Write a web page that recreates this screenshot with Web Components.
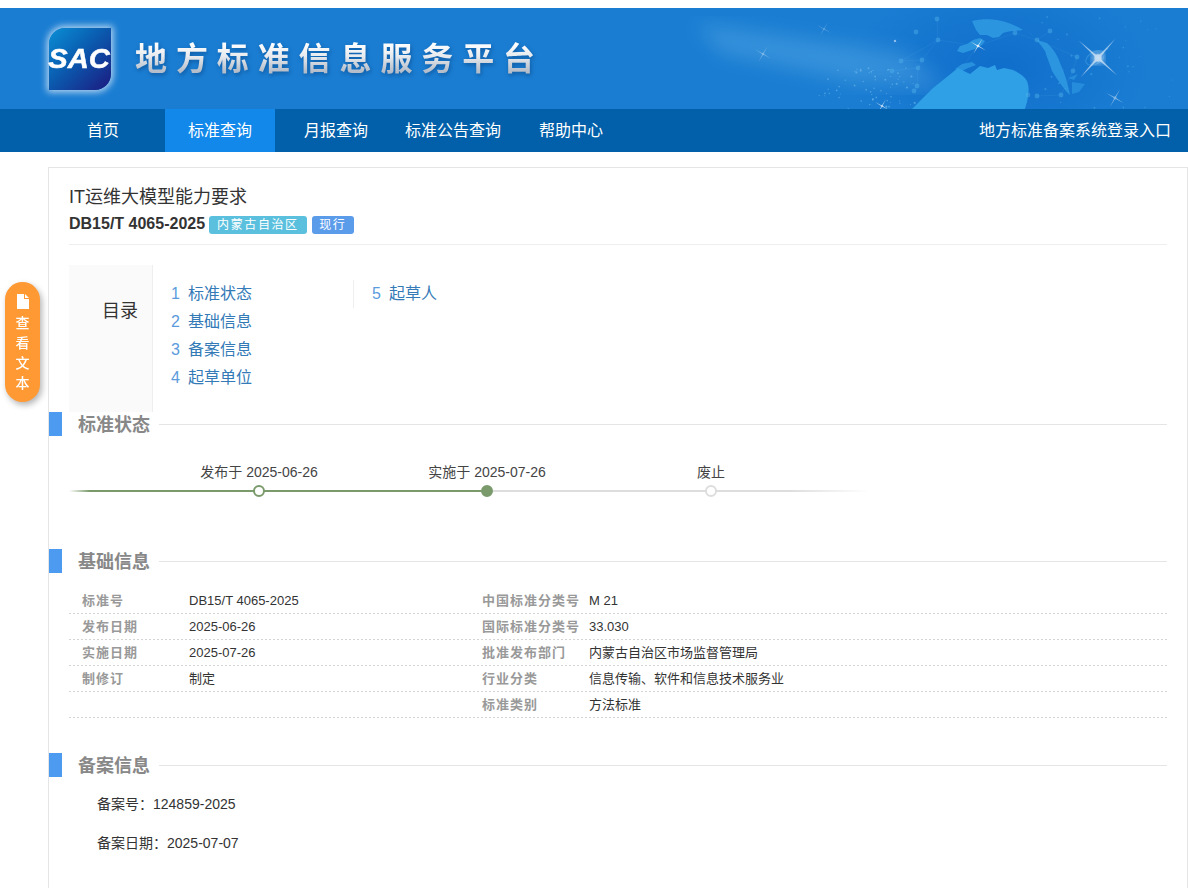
<!DOCTYPE html>
<html lang="zh-CN">
<head>
<meta charset="utf-8">
<title>地方标准信息服务平台</title>
<style>
  html, body { margin: 0; padding: 0; height: 888px; overflow: hidden; background: #fff; }
  body { padding-top: 8px; box-sizing: border-box; font-family: "Liberation Sans", "Noto Sans CJK SC", sans-serif; color: #333; }
</style>
</head>
<body>
<site-banner></site-banner>
<site-nav></site-nav>
<float-button></float-button>
<std-card>
  <std-heading name="IT运维大模型能力要求" code="DB15/T 4065-2025"></std-heading>
  <std-toc></std-toc>
  <std-section title="标准状态" gap="26">
    <std-timeline></std-timeline>
  </std-section>
  <std-section title="基础信息" gap="15" top="47">
    <info-table></info-table>
  </std-section>
  <std-section title="备案信息" gap="17" top="35">
    <record-lines></record-lines>
  </std-section>
</std-card>

<script>
const FONT = `"Liberation Sans", "Noto Sans CJK SC", sans-serif`;

const NAV_ITEMS = [
  { label: "首页", pad: "0 46px 0 0" },
  { label: "标准查询", pad: "0 23px" , active: true },
  { label: "月报查询", pad: "0 18px 0 29px" },
  { label: "标准公告查询", pad: "0 19px" },
  { label: "帮助中心", pad: "0 19px" },
];

const BASIC_INFO = [
  ["标准号", "DB15/T 4065-2025", "中国标准分类号", "M 21"],
  ["发布日期", "2025-06-26", "国际标准分类号", "33.030"],
  ["实施日期", "2025-07-26", "批准发布部门", "内蒙古自治区市场监督管理局"],
  ["制修订", "制定", "行业分类", "信息传输、软件和信息技术服务业"],
  ["", "", "标准类别", "方法标准"],
];

const TOC_ITEMS = ["标准状态", "基础信息", "备案信息", "起草单位", "起草人"];

// big network dots around the globe, x/y inside the banner
const NET_DOTS = [
  [937, 11], [916, 24], [938, 32], [901, 53], [922, 52], [918, 60], [892, 63], [917, 78], [914, 83],
  [1015, 25], [1037, 32], [1050, 23], [1077, 49], [1073, 63], [1061, 87], [1037, 88], [1028, 87],
];

function sparkle(x, y, r, angle, opacity) {
  const t = r * 0.05;
  return `<g filter="url(#hair)" opacity="${opacity}"><path transform="translate(${x} ${y}) rotate(${angle})" fill="#fff"
    d="M0 ${-r}L${t} ${-t}L${r} 0L${t} ${t}L0 ${r}L${-t} ${t}L${-r} 0L${-t} ${-t}Z"></path>
    <circle cx="${x}" cy="${y}" r="${Math.max(1, r * 0.14)}" fill="#fff"></circle></g>`;
}

function bannerDots() {
  let seed = 17;
  const rnd = () => (seed = (seed * 16807) % 2147483647) / 2147483647;
  let out = "";
  for (let i = 0; i < 70; i++) {
    const x = 815 + rnd() * 100;
    const y = 60 + rnd() * 41;
    if (x + y * 1.1 < 905) continue;
    out += `<circle cx="${x.toFixed(1)}" cy="${y.toFixed(1)}" r="${(0.5 + rnd() * 0.6).toFixed(1)}" fill="#7cc4f2" opacity="0.5"></circle>`;
  }
  for (let i = 0; i < 30; i++) {
    const x = 1040 + rnd() * 140;
    const y = rnd() * 101;
    out += `<circle cx="${x.toFixed(1)}" cy="${y.toFixed(1)}" r="${(0.5 + rnd() * 0.7).toFixed(1)}" fill="#4fa8e6" opacity="0.45"></circle>`;
  }
  return out + NET_DOTS.map(([x, y]) => `<circle cx="${x}" cy="${y}" r="2.4" fill="#4fb0ea" opacity="0.45" filter="url(#hair)"></circle>`).join("");
}

class SiteBanner extends HTMLElement {
  connectedCallback() {
    const root = this.attachShadow({ mode: "open" });
    root.innerHTML = `
      <style>
        :host { display: block; height: 101px; position: relative; overflow: hidden; background: #1a7dd2; }
        .art { position: absolute; inset: 0; width: 100%; height: 100%; }
        .inner { position: relative; display: flex; align-items: center; height: 100%; padding-left: 49px; gap: 24px; }
        .logo {
          position: relative; width: 62px; height: 62px; flex: none; margin-top: 1px;
          border-radius: 16px 0 16px 0;
          background: linear-gradient(135deg, #0a8fd6 0%, #0a5cb0 45%, #1c1a80 100%);
          box-shadow: 0 0 7px 2px rgba(255, 255, 255, 0.7);
        }
        .logo span {
          position: absolute; left: -1px; top: 17px; width: 62px; text-align: center;
          font: italic bold 28px/27px "Liberation Sans", sans-serif; color: #fff;
          transform: scaleX(1.04); -webkit-text-stroke: 0.5px #fff;
        }
        .name {
          font: 700 32px/44px "Noto Sans CJK SC", sans-serif; letter-spacing: 8.9px; white-space: nowrap;
          margin-top: -5px;
          background: linear-gradient(180deg, transparent 10%, #ffffff 20%, #e8ebef 50%, #b4bdc9 85%);
          -webkit-background-clip: text; background-clip: text; color: transparent;
          filter: drop-shadow(1px 2px 2px rgba(0, 40, 90, 0.4));
        }
      </style>
      <svg class="art" viewBox="0 0 1188 101" preserveAspectRatio="none" aria-hidden="true">
        <defs>
          <filter id="hair"><feGaussianBlur stdDeviation="0.4"></feGaussianBlur></filter>
          <filter id="halo"><feGaussianBlur stdDeviation="3"></feGaussianBlur></filter>
          <filter id="wide"><feGaussianBlur stdDeviation="10"></feGaussianBlur></filter>
          <radialGradient id="glow" cx="0.5" cy="0.5" r="0.5">
            <stop offset="0" stop-color="#0f6ccb" stop-opacity="0.9"></stop>
            <stop offset="1" stop-color="#0f6ccb" stop-opacity="0"></stop>
          </radialGradient>
        </defs>
        <ellipse cx="1000" cy="60" rx="150" ry="90" fill="url(#glow)"></ellipse>
        <path d="M695 15L905 45L945 80L860 75L720 45Z" fill="#6ab8ec" opacity="0.35" filter="url(#wide)"></path>
        <g stroke="#7cc4f2" stroke-width="0.4" opacity="0.22" fill="none">
          <path d="M937 11L938 32L901 53L922 52L938 32M922 52L918 60L892 63M918 60L917 78L914 83M938 32L977 38L1015 25M977 38L955 70M1015 25L1037 32L1050 23M1037 32L1077 49L1073 63L1061 87M1037 88L1061 87"></path>
        </g>
        <g fill="#2b95e0">
          <path d="M972 13C980 11 990 11 997 12C1008 14 1017 18 1023 22C1015 23 1009 23 1003 25L999 29L993 30L987 27L980 27L976 22Z"></path>
          <path d="M973 32L980 30L985 33L982 37L975 41L963 45L957 43L960 38L967 36Z"></path>
          <path d="M1027 22L1037 32L1047 35C1054 42 1058 48 1060 55C1065 66 1068 76 1070 87C1066 84 1064 80 1062 78C1058 72 1055 68 1052 63C1050 56 1047 50 1045 43C1040 36 1034 28 1027 22Z"></path>
          <path d="M1072 74L1085 76L1079 84L1072 86ZM1068 70L1078 66L1074 72Z" opacity="0.7"></path>
          <path d="M955 61L962 56L972 54L976 57L968 60L960 64Z" opacity="0.9"></path>
        </g>
        <path fill="#2f9fe6" d="M912 101L933 80L948 68L958 60L970 66L980 58L988 60L995 57L997 62L1004 60L1013 62C1020 65 1025 69 1027 73C1029 78 1029 83 1028 87C1028 92 1026 97 1025 101Z"></path>
        <ellipse cx="1095" cy="50" rx="10" ry="6" transform="rotate(-30 1095 50)" fill="none" stroke="#4fb0ea" stroke-width="1" opacity="0.45"></ellipse>
        <circle cx="1098" cy="50" r="6" fill="#fff" opacity="0.55" filter="url(#halo)"></circle>
        ${bannerDots()}
        ${sparkle(978, 38, 9, 30, 0.85)}
        ${sparkle(1098, 50, 26, 42, 0.55)}
        ${sparkle(1115, 90, 10, 30, 0.45)}
        ${sparkle(763, 46, 9, 30, 0.35)}
        ${sparkle(824, 21, 8, 30, 0.25)}
        ${sparkle(895, 33, 3, 30, 0.6)}
        ${sparkle(882, 98, 8, 30, 0.7)}
      </svg>
      <div class="inner">
        <div class="logo"><span>SAC</span></div>
        <div class="name">地方标准信息服务平台</div>
      </div>
    `;
  }
}

class SiteNav extends HTMLElement {
  connectedCallback() {
    const root = this.attachShadow({ mode: "open" });
    root.innerHTML = `
      <style>
        :host { display: flex; height: 43px; background: #0260aa; padding: 0 17px 0 87px; font: 16px/43px ${FONT}; color: #fff; }
        a { color: inherit; text-decoration: none; white-space: nowrap; display: block; }
        a.on { background: #1188ea; }
        .login { margin-left: auto; }
      </style>
      ${NAV_ITEMS.map((item) => `<a href="#" class="${item.active ? "on" : ""}" style="padding:${item.pad}">${item.label}</a>`).join("")}
      <a class="login" href="#">地方标准备案系统登录入口</a>
    `;
  }
}

class FloatButton extends HTMLElement {
  connectedCallback() {
    const root = this.attachShadow({ mode: "open" });
    root.innerHTML = `
      <style>
        :host {
          position: fixed; left: 5px; top: 282px; width: 35px; height: 120px; box-sizing: border-box;
          padding-top: 12px; border-radius: 18px; background: #ff9933; color: #fff;
          box-shadow: 2px 3px 6px rgba(0, 0, 0, 0.3);
          display: flex; flex-direction: column; align-items: center;
          font: 500 14px/20px ${FONT}; z-index: 5;
        }
        svg { width: 12px; height: 15px; fill: #fff; margin-bottom: 4px; display: block; }
        span { display: block; }
      </style>
      <svg viewBox="0 0 12 15" aria-hidden="true"><path d="M0 0H7V5H12V15H0ZM8 0L12 4H8Z"></path></svg>
      <span>查</span><span>看</span><span>文</span><span>本</span>
    `;
  }
}

class StdCard extends HTMLElement {
  connectedCallback() {
    const root = this.attachShadow({ mode: "open" });
    root.innerHTML = `
      <style>
        :host {
          display: block; box-sizing: border-box; width: 1140px; height: 760px; margin: 15px 0 0 48px;
          padding: 16px 20px 0; border: 1px solid #e5e5e5; background: #fff;
        }
      </style>
      <slot></slot>
    `;
  }
}

class StdHeading extends HTMLElement {
  connectedCallback() {
    const root = this.attachShadow({ mode: "open" });
    root.innerHTML = `
      <style>
        :host { display: block; padding-bottom: 7px; border-bottom: 1px solid #eee; color: #333; }
        h1 { margin: 0; font: 400 18px/26px ${FONT}; }
        .sub { display: flex; align-items: center; margin-top: 1px; height: 26px; }
        b { font: bold 16px/26px ${FONT}; margin-right: 4px; }
        .tag { height: 18px; border-radius: 3px; color: #fff; font: 12px/18px ${FONT}; letter-spacing: 1.6px; padding: 0 8px; margin-right: 5px; margin-top: 1px; }
        .blue { background: #5bc0de; }
        .state { background: #5a9bea; padding: 0 7.5px; }
      </style>
      <h1>${this.getAttribute("name")}</h1>
      <div class="sub">
        <b>${this.getAttribute("code")}</b>
        <span class="tag blue">内蒙古自治区</span>
        <span class="tag state">现行</span>
      </div>
    `;
  }
}

class StdToc extends HTMLElement {
  connectedCallback() {
    const root = this.attachShadow({ mode: "open" });
    const row = (label, i) => `<a href="#"><i>${i + 1}</i>${label}</a>`;
    root.innerHTML = `
      <style>
        :host { display: flex; height: 147px; margin-top: 20px; font: 16px/28px ${FONT}; }
        .head {
          width: 83px; background: #fafafa; border-right: 1px solid #eee;
          font-size: 18px; line-height: 93px; text-align: right; color: #333;
        }
        .head span { display: block; padding-right: 14px; }
        .col { width: 182px; padding: 15px 0 0 18px; }
        .col + .col { padding-left: 19px; position: relative; }
        .col + .col::before { content: ""; position: absolute; left: 0; top: 15px; height: 28px; border-left: 1px solid #eee; }
        a { display: block; color: #337ab7; text-decoration: none; white-space: nowrap; }
        i { font-style: normal; color: #5b9bdc; display: inline-block; width: 17px; }
      </style>
      <div class="head"><span>目录</span></div>
      <div class="col">${TOC_ITEMS.slice(0, 4).map(row).join("")}</div>
      <div class="col">${row(TOC_ITEMS[4], 4)}</div>
    `;
  }
}

class StdSection extends HTMLElement {
  connectedCallback() {
    const root = this.attachShadow({ mode: "open" });
    const top = this.getAttribute("top") || 0;
    const gap = this.getAttribute("gap") || 0;
    root.innerHTML = `
      <style>
        :host { display: block; margin: ${top}px -20px 0 -20px; }
        .bar { display: flex; align-items: center; height: 24px; }
        .mark { width: 13px; height: 24px; background: #4d9bf0; flex: none; }
        h2 { margin: 2px 9px 0 16px; font: bold 18px/24px ${FONT}; color: #888; white-space: nowrap; }
        .rule { flex: 1; height: 1px; background: #e5e5e5; margin-right: 20px; }
        .body { padding: ${gap}px 20px 0; }
      </style>
      <div class="bar"><span class="mark"></span><h2>${this.getAttribute("title")}</h2><span class="rule"></span></div>
      <div class="body"><slot></slot></div>
    `;
  }
}

class StdTimeline extends HTMLElement {
  connectedCallback() {
    const root = this.attachShadow({ mode: "open" });
    root.innerHTML = `
      <style>
        :host {
          display: grid; grid-template-columns: 190px 228px 224px 158px; width: 800px; height: 40px; position: relative;
          font: 14px/20px ${FONT}; color: #444;
        }
        .line { position: absolute; left: 0; top: 28px; height: 2px; }
        .todo { width: 800px; background: linear-gradient(90deg, #ddd 90%, rgba(221, 221, 221, 0)); }
        .done { width: 418px; background: linear-gradient(90deg, #fff, #7a9a6b 5%); }
        .stop { width: 0; grid-column-start: var(--c); display: flex; flex-direction: column; align-items: center; position: relative; }
        .stop span { white-space: nowrap; }
        .dot { width: 12px; height: 12px; box-sizing: border-box; border-radius: 50%; margin-top: 3px; border: 2px solid #7a9a6b; background: #fff; flex: none; }
        .fill { background: #7a9a6b; }
        .off { border-color: #ddd; }
      </style>
      <div class="line todo"></div>
      <div class="line done"></div>
      <div class="stop" style="--c:2"><span>发布于 2025-06-26</span><div class="dot"></div></div>
      <div class="stop" style="--c:3"><span>实施于 2025-07-26</span><div class="dot fill"></div></div>
      <div class="stop" style="--c:4"><span>废止</span><div class="dot off"></div></div>
    `;
  }
}

class InfoTable extends HTMLElement {
  connectedCallback() {
    const root = this.attachShadow({ mode: "open" });
    const cell = (label, value) => `<span class="k">${label}</span><span class="v">${value}</span>`;
    root.innerHTML = `
      <style>
        :host { display: block; font: 13px/25px ${FONT}; }
        .row {
          display: grid; grid-template-columns: 120px 280px 120px 1fr; height: 26px;
          background: repeating-linear-gradient(90deg, #d4d4d4 0 2px, transparent 2px 4px) left bottom / 100% 1px no-repeat;
        }
        .k { padding-left: 13px; color: #999; font-weight: bold; letter-spacing: 1px; white-space: nowrap; }
        .v { color: #333; white-space: nowrap; }
      </style>
      ${BASIC_INFO.map((r) => `<div class="row">${cell(r[0], r[1])}${cell(r[2], r[3])}</div>`).join("")}
    `;
  }
}

class RecordLines extends HTMLElement {
  connectedCallback() {
    const root = this.attachShadow({ mode: "open" });
    root.innerHTML = `
      <style>
        :host { display: block; padding-left: 28px; font: 14px/20px ${FONT}; color: #333; }
        p { margin: 0 0 19px; }
      </style>
      <p>备案号：124859-2025</p>
      <p>备案日期：2025-07-07</p>
    `;
  }
}

customElements.define("site-banner", SiteBanner);
customElements.define("site-nav", SiteNav);
customElements.define("float-button", FloatButton);
customElements.define("std-card", StdCard);
customElements.define("std-heading", StdHeading);
customElements.define("std-toc", StdToc);
customElements.define("std-section", StdSection);
customElements.define("std-timeline", StdTimeline);
customElements.define("info-table", InfoTable);
customElements.define("record-lines", RecordLines);
</script>
</body>
</html>
